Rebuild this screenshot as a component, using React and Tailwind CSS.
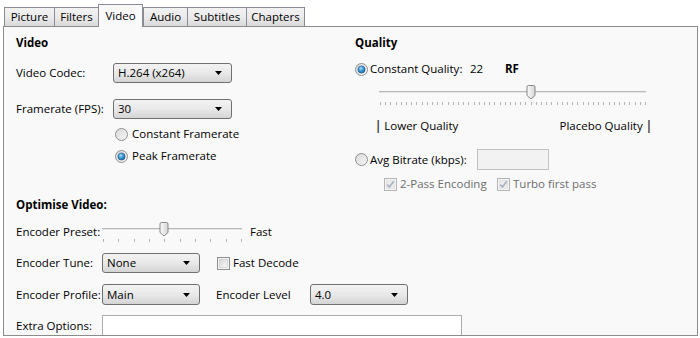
import React from 'react';

const font = { fontFamily: '"Open Sans", "Noto Sans", sans-serif' };

function Tab({ label, width, active }) {
  if (active) {
    return (
      <div
        className="relative z-10 -mb-px flex h-[23px] items-center justify-center border border-b-0 border-[#898c95] bg-[#f9f9f9] text-black"
        style={{ width }}
      >
        {label}
      </div>
    );
  }
  return (
    <div
      className="flex h-[19px] items-center justify-center border border-b-0 border-r-0 border-[#898c95] bg-gradient-to-b from-[#f2f2f2] via-[#ebebeb] to-[#d9d9d9] text-black last:border-r"
      style={{ width }}
    >
      {label}
    </div>
  );
}

function Combo({ value, width }) {
  return (
    <div
      className="flex h-full items-center justify-between rounded-[3px] border border-[#707070] bg-gradient-to-b from-[#f3f3f3] via-[#e9e9e9] to-[#d4d4d4] pl-[4px] pr-[9px] text-black"
      style={{ width }}
    >
      <span>{value}</span>
      <svg width="7" height="4" viewBox="0 0 7 4">
        <path d="M0 0H7L3.5 4Z" fill="#000" />
      </svg>
    </div>
  );
}

function Radio({ checked }) {
  return (
    <svg width="13" height="13" viewBox="0 0 13 13" className="shrink-0">
      <defs>
        <linearGradient id="rOuter" x1="0" y1="0" x2="1" y2="1">
          <stop offset="0" stopColor="#d8d8d8" />
          <stop offset="1" stopColor="#f8f8f8" />
        </linearGradient>
        <radialGradient id="rDot" cx="0.4" cy="0.35" r="0.7">
          <stop offset="0" stopColor="#a6e0fa" />
          <stop offset="0.5" stopColor="#3a9bd8" />
          <stop offset="1" stopColor="#1d5d99" />
        </radialGradient>
      </defs>
      <circle cx="6.5" cy="6.5" r="6" fill="url(#rOuter)" stroke="#8e8f8f" strokeWidth="1" />
      {checked && <circle cx="6.5" cy="6.5" r="3.6" fill="url(#rDot)" stroke="#1b4f80" strokeWidth="0.6" />}
    </svg>
  );
}

function Check({ checked, disabled }) {
  return (
    <svg width="13" height="13" viewBox="0 0 13 13" className="shrink-0">
      <defs>
        <linearGradient id="cIn" x1="0" y1="0" x2="1" y2="1">
          <stop offset="0" stopColor="#d6d6d6" />
          <stop offset="1" stopColor="#fafafa" />
        </linearGradient>
      </defs>
      <rect x="0.5" y="0.5" width="12" height="12" fill={disabled ? '#f4f4f4' : '#f6f6f6'} stroke={disabled ? '#b5b5b5' : '#8e8f8f'} />
      <rect x="2.5" y="2.5" width="8" height="8" fill={disabled ? '#ececec' : 'url(#cIn)'} stroke={disabled ? '#dcdcdc' : '#c4c4c4'} strokeWidth="0.6" />
      {checked && <path d="M3.2 6.6L5.4 9L9.8 3.2" fill="none" stroke="#a7b3c6" strokeWidth="1.6" />}
    </svg>
  );
}

function Slider({ width, ticks, thumb, tickY }) {
  const start = 1;
  const end = width - 1;
  const marks = [];
  for (let i = 0; i < ticks; i++) {
    const x = Math.round(start + ((end - start) * i) / (ticks - 1)) + 0.5;
    marks.push(<line key={i} x1={x} y1={tickY} x2={x} y2={tickY + 3} stroke="#b4b4b4" strokeWidth="1" />);
  }
  const tx = thumb - 4.5;
  return (
    <svg width={width} height={tickY + 4} viewBox={`0 0 ${width} ${tickY + 4}`} className="block">
      <defs>
        <linearGradient id="thumbG" x1="0" y1="0" x2="1" y2="0">
          <stop offset="0" stopColor="#fbfbfb" />
          <stop offset="1" stopColor="#d6d6d6" />
        </linearGradient>
      </defs>
      <rect x="0" y={tickY - 11} width={width} height="1" fill="#b8b8b8" />
      <rect x="0" y={tickY - 10} width={width} height="1" fill="#e6e6e6" />
      {marks}
      <path
        transform={`translate(${tx},${tickY - 17})`}
        d="M0.5 2Q0.5 0.5 2 0.5H7Q8.5 0.5 8.5 2V10.5L4.5 14L0.5 10.5Z"
        fill="url(#thumbG)"
        stroke="#878787"
      />
    </svg>
  );
}

export default function App() {
  return (
    <div className="h-[338px] w-[700px] overflow-hidden bg-white text-[11.5px] leading-[16px] text-black" style={font}>
      <div className="flex h-[26px] items-end pl-[4px]">
        <Tab label="Picture" width={50} />
        <Tab label="Filters" width={44} />
        <Tab label="Video" width={45} active />
        <Tab label="Audio" width={44} />
        <Tab label="Subtitles" width={59} />
        <Tab label="Chapters" width={59} />
      </div>

      <div className="ml-[3px] h-[310px] w-[695px] overflow-hidden border border-[#8c8c8c] bg-[#f9f9f9] pl-[12px] pt-[8px]">
        <div className="flex">
          {/* left column */}
          <div className="w-[339px]">
            <div className="h-[16px] font-bold">Video</div>
            <div className="mt-[12px] flex h-[20px] items-center">
              <div className="w-[97px]">Video Codec:</div>
              <Combo value="H.264 (x264)" width={119} />
            </div>
            <div className="mt-[16px] flex h-[20px] items-center">
              <div className="w-[97px]">Framerate (FPS):</div>
              <Combo value="30" width={119} />
            </div>
            <div className="mt-[7px] flex h-[16px] items-center gap-[4px] pl-[99px]">
              <Radio />
              <span>Constant Framerate</span>
            </div>
            <div className="mt-[6px] flex h-[16px] items-center gap-[4px] pl-[99px]">
              <Radio checked />
              <span>Peak Framerate</span>
            </div>
          </div>

          {/* right column */}
          <div className="w-[320px]">
            <div className="h-[16px] font-bold">Quality</div>
            <div className="mt-[10px] flex h-[16px] items-center">
              <Radio checked />
              <span className="ml-[2px] w-[100px]">Constant Quality:</span>
              <span className="w-[35px]">22</span>
              <span className="font-bold">RF</span>
            </div>
            <div className="mt-[7px] pl-[24px]">
              <Slider width={267} ticks={52} thumb={152} tickY={18} />
            </div>
            <div className="mt-[12px] flex h-[16px] w-[297px] items-center justify-between pl-[20px]">
              <span>
                <span className="font-bold text-[#333]">|</span> Lower Quality
              </span>
              <span>
                Placebo Quality <span className="font-bold text-[#333]">|</span>
              </span>
            </div>
            <div className="mt-[15px] flex h-[21px] items-center">
              <Radio />
              <span className="ml-[2px] w-[107px]">Avg Bitrate (kbps):</span>
              <div className="h-[21px] w-[72px] border border-[#c2c2c2] bg-[#f2f2f2]" />
            </div>
            <div className="mt-[6px] flex h-[16px] items-center pl-[29px] text-[#6d6d6d]">
              <Check checked disabled />
              <span className="ml-[3px] w-[97px]">2-Pass Encoding</span>
              <Check checked disabled />
              <span className="ml-[3px]">Turbo first pass</span>
            </div>
          </div>
        </div>

        {/* optimise */}
        <div className="mt-[5px] h-[16px] font-bold">Optimise Video:</div>
        <div className="mt-[7px] flex h-[24px] items-start">
          <div className="w-[86px] leading-[24px]">Encoder Preset:</div>
          <Slider width={140} ticks={10} thumb={62} tickY={19} />
          <span className="ml-[8px] leading-[24px]">Fast</span>
        </div>
        <div className="mt-[9px] flex h-[20px] items-center">
          <div className="w-[86px]">Encoder Tune:</div>
          <Combo value="None" width={98} />
          <div className="ml-[17px] flex items-center gap-[3px]">
            <Check />
            <span>Fast Decode</span>
          </div>
        </div>
        <div className="mt-[11px] flex h-[21px] items-center">
          <div className="w-[86px]">Encoder Profile:</div>
          <Combo value="Main" width={98} />
          <div className="ml-[16px] w-[94px]">Encoder Level</div>
          <Combo value="4.0" width={98} />
        </div>
        <div className="mt-[10px] flex h-[22px] items-start">
          <div className="w-[86px] leading-[22px]">Extra Options:</div>
          <div className="h-[30px] w-[360px] border border-[#abadb3] bg-white" />
        </div>
      </div>
    </div>
  );
}
